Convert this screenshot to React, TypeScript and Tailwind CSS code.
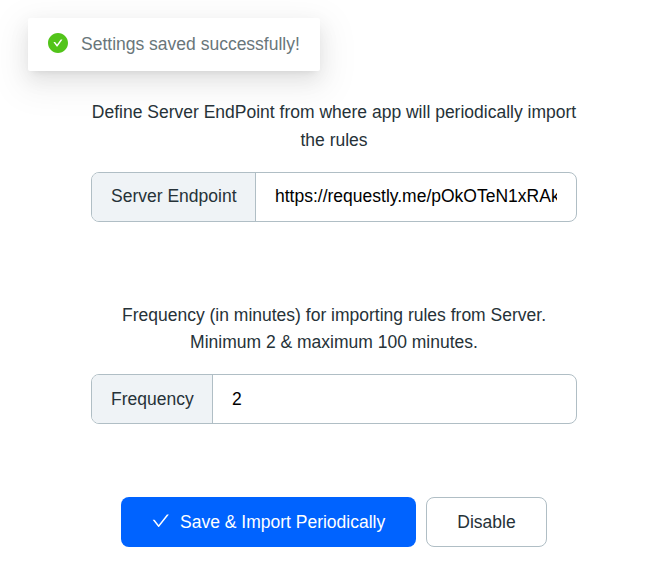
import React from "react";

function Toast() {
  return (
    <div className="ml-7 mt-[18px] flex h-[53px] w-[292px] items-center rounded-[2px] bg-white pl-5 shadow-[0_4px_8px_-5px_rgba(0,0,0,0.12),0_8px_20px_rgba(0,0,0,0.08),0_11px_35px_10px_rgba(0,0,0,0.05)]">
      <svg viewBox="64 64 896 896" className="mb-[3px] size-5 shrink-0" fill="#52c41a">
        <path d="M512 64C264.6 64 64 264.6 64 512s200.6 448 448 448 448-200.6 448-448S759.4 64 512 64zm193.5 301.7l-210.6 292a31.8 31.8 0 0 1-51.7 0L318.5 484.9c-3.8-5.3 0-12.7 6.5-12.7h46.9c10.2 0 19.9 4.9 25.9 13.3l71.2 98.8 157.2-218c6-8.3 15.6-13.3 25.9-13.3H699c6.5 0 10.3 7.4 6.5 12.7z" />
      </svg>
      <span className="ml-[13px] whitespace-nowrap text-[#69767a]">Settings saved successfully!</span>
    </div>
  );
}

function Field({
  label,
  value,
  labelWidth,
  textInset = "",
}: {
  label: string;
  value: string;
  labelWidth: string;
  textInset?: string;
}) {
  return (
    <div className="flex h-[50px] w-[486px] overflow-hidden rounded-[8px] border border-[#b0bec5] bg-white">
      <div className={`${labelWidth} ${textInset} flex shrink-0 items-center border-r border-[#b0bec5] bg-[#eff3f6] pl-[19px] text-[#263238]`}>
        {label}
      </div>
      <input className={`${textInset} min-w-0 flex-1 px-[19px] text-black outline-none`} defaultValue={value} />
    </div>
  );
}

export default function App() {
  return (
    <div className="h-[563px] w-[655px] overflow-hidden bg-white font-['Liberation_Sans',Arial,sans-serif] text-[17.5px] leading-[27.5px] text-[#263238]">
      <Toast />
      <main className="ml-[91px] w-[486px]">
        <p className="mt-[28px] whitespace-nowrap text-center">
          Define Server EndPoint from where app will periodically import
          <br />
          the rules
        </p>
        <div className="mt-[18px]">
          <Field label="Server Endpoint" value="https://requestly.me/pOkOTeN1xRAkxyz" labelWidth="w-[164px]" />
        </div>
        <p className="mt-[79.5px] whitespace-nowrap text-center">
          Frequency (in minutes) for importing rules from Server.
          <br />
          Minimum 2 &amp; maximum 100 minutes.
        </p>
        <div className="mt-[17.5px]">
          <Field label="Frequency" value="2" labelWidth="w-[121px]" textInset="pt-[2px]" />
        </div>
        <div className="ml-[30px] mt-[73px] flex gap-[10px]">
          <button className="flex h-[50px] w-[295px] items-center rounded-[8px] bg-[#0063ff] pl-[31px] text-white">
            <svg viewBox="64 64 896 896" className="mb-[3px] size-[17.5px]" fill="currentColor">
              <path d="M912 190h-69.9c-9.8 0-19.1 4.5-25.1 12.2L404.7 724.5 207 474a32 32 0 0 0-25.1-12.2H112c-6.7 0-10.4 7.7-6.3 12.9l273.9 347c12.8 16.2 37.4 16.2 50.3 0l488.4-618.9c4.1-5.1.4-12.8-6.3-12.8z" />
            </svg>
            <span className="ml-[10.5px] whitespace-nowrap pt-[2px]">Save &amp; Import Periodically</span>
          </button>
          <button className="h-[50px] w-[121px] rounded-[8px] border border-[#b0bec5] bg-white pt-[2px]">Disable</button>
        </div>
      </main>
    </div>
  );
}
